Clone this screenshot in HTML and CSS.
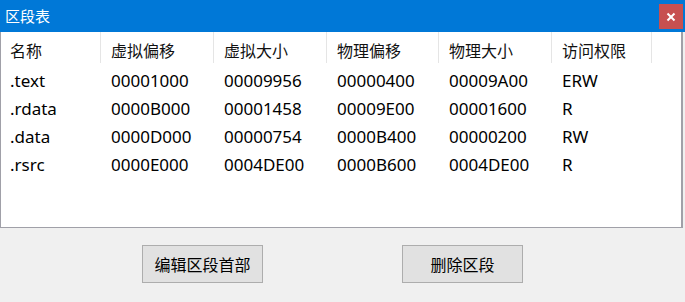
FILE: index.html
```html
<!DOCTYPE html>
<html lang="zh-CN">
<head>
  <meta charset="UTF-8">
  <title>区段表</title>
  <link rel="stylesheet" href="styles.css">
</head>
<body>
  <div class="window">
    <div class="titlebar">
      <span class="title">区段表</span>
      <button class="close-button">
        <svg width="10" height="10" viewBox="0 0 10 10">
          <line x1="1.5" y1="1.5" x2="8.5" y2="8.5" stroke="#fff" stroke-width="2"/>
          <line x1="8.5" y1="1.5" x2="1.5" y2="8.5" stroke="#fff" stroke-width="2"/>
        </svg>
      </button>
    </div>

    <div class="list">
      <div class="list-header">
        <div class="col">名称</div>
        <div class="col">虚拟偏移</div>
        <div class="col">虚拟大小</div>
        <div class="col">物理偏移</div>
        <div class="col">物理大小</div>
        <div class="col">访问权限</div>
      </div>
      <div class="row">
        <div class="cell">.text</div>
        <div class="cell">00001000</div>
        <div class="cell">00009956</div>
        <div class="cell">00000400</div>
        <div class="cell">00009A00</div>
        <div class="cell">ERW</div>
      </div>
      <div class="row">
        <div class="cell">.rdata</div>
        <div class="cell">0000B000</div>
        <div class="cell">00001458</div>
        <div class="cell">00009E00</div>
        <div class="cell">00001600</div>
        <div class="cell">R</div>
      </div>
      <div class="row">
        <div class="cell">.data</div>
        <div class="cell">0000D000</div>
        <div class="cell">00000754</div>
        <div class="cell">0000B400</div>
        <div class="cell">00000200</div>
        <div class="cell">RW</div>
      </div>
      <div class="row">
        <div class="cell">.rsrc</div>
        <div class="cell">0000E000</div>
        <div class="cell">0004DE00</div>
        <div class="cell">0000B600</div>
        <div class="cell">0004DE00</div>
        <div class="cell">R</div>
      </div>
    </div>

    <div class="actions">
      <button class="button">编辑区段首部</button>
      <button class="button">删除区段</button>
    </div>
  </div>
</body>
</html>
```

FILE: styles.css
```css
body {
  margin: 0;
  padding: 0;
  font-family: "Noto Sans", "Noto Sans CJK SC", sans-serif;
  background-color: #f0f0f0;
  color: #000;
  width: 685px;
  height: 302px;
  overflow: hidden;
}

.window {
  display: flex;
  flex-direction: column;
  height: 100%;
}

.titlebar {
  display: flex;
  justify-content: space-between;
  align-items: flex-start;
  height: 32px;
  background-color: #0078d7;
  color: white;
}

.title {
  font-family: "Noto Sans CJK SC", sans-serif;
  font-size: 15px;
  line-height: 32px;
  padding-left: 5px;
}

.close-button {
  margin-top: 4px;
  margin-right: 2px;
  width: 24px;
  height: 25px;
  padding: 0;
  border: none;
  background-color: #c75050;
  display: flex;
  justify-content: center;
  align-items: center;
}

.list {
  width: 680px;
  height: 195px;
  background-color: white;
  border: 1px solid #a0a0a8;
  border-right-width: 2px;
  border-top: none;
}

.list-header,
.row {
  display: grid;
  grid-template-columns: 100px 113px 113px 112px 113px 100px;
}

.list-header {
  height: 35px;
  font-family: "Noto Sans CJK SC", sans-serif;
  font-size: 16px;
}

.col {
  padding-left: 10px;
  line-height: 36px;
  border-right: 1px solid #e5e5e5;
  height: 31px;
  overflow: hidden;
  color: #111;
}

.col:first-child {
  padding-left: 9px;
}

.row {
  height: 28px;
  font-size: 17px;
}

.cell {
  padding-left: 10px;
  line-height: 28px;
}

.cell:first-child {
  padding-left: 9px;
}

.actions {
  display: flex;
  gap: 139px;
  padding-left: 142px;
  padding-top: 17px;
}

.button {
  width: 121px;
  height: 38px;
  background-color: #e1e1e1;
  border: 1px solid #adadad;
  font-family: "Noto Sans CJK SC", sans-serif;
  font-size: 16px;
  color: #000;
  padding: 0;
}
```
